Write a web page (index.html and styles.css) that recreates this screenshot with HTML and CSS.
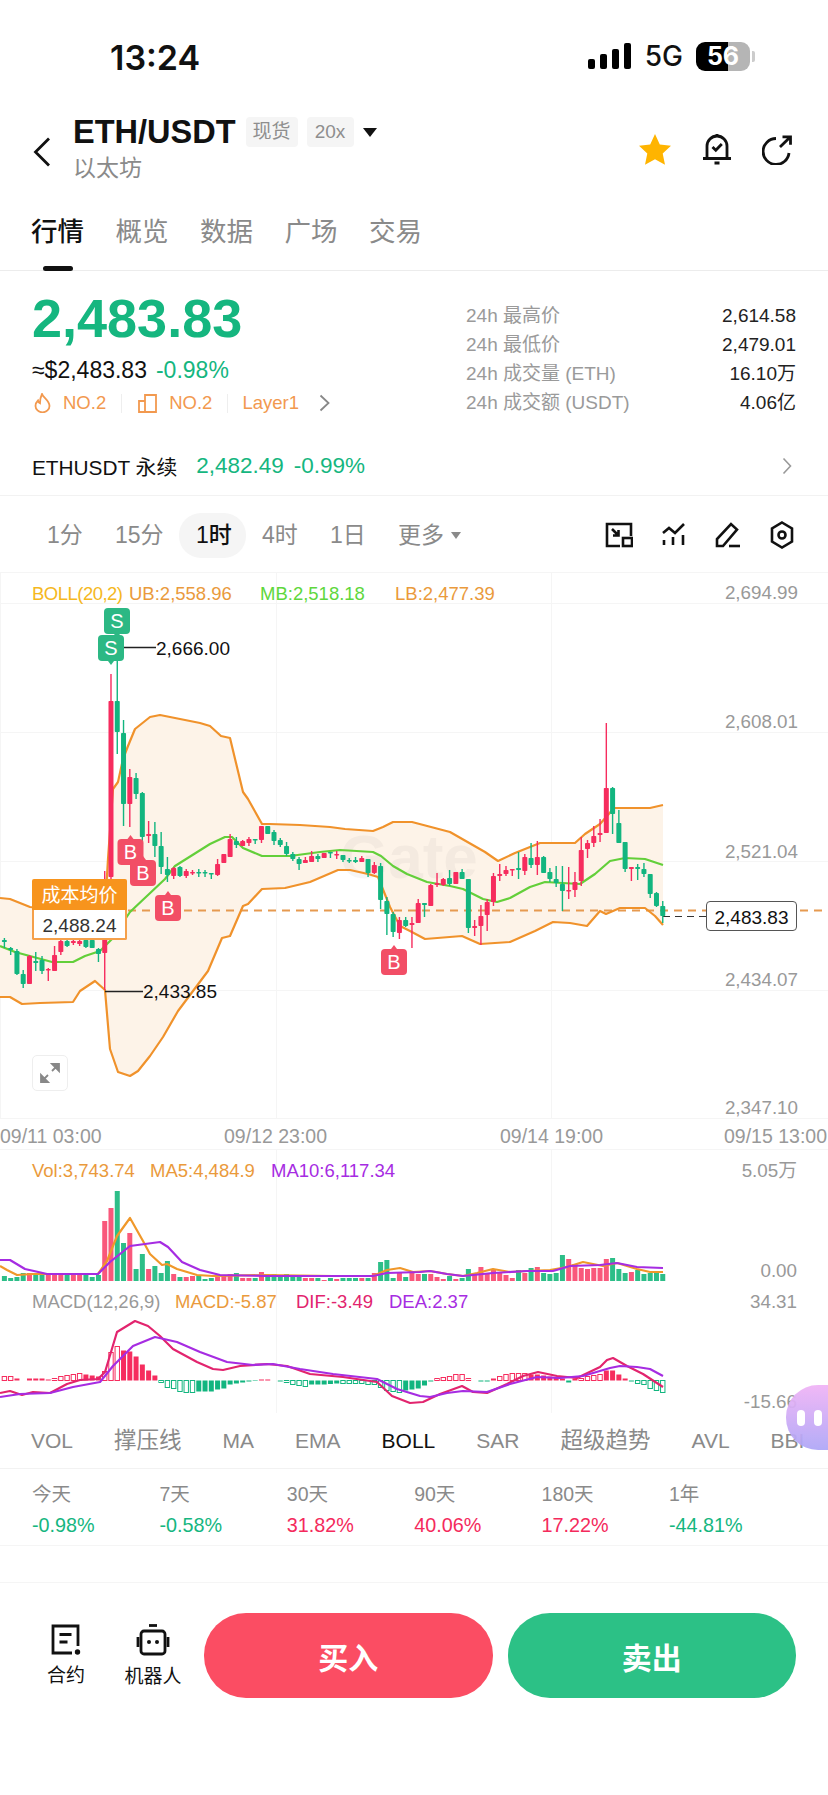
FILE: index.html
```html
<!DOCTYPE html>
<html lang="zh-CN">
<head>
    <meta charset="UTF-8">
    <meta name="viewport" content="width=device-width, initial-scale=1.0">
    <title>ETH/USDT</title>
    <link rel="stylesheet" href="styles.css">
</head>
<body>
    <div class="page">
        <div class="status">
            <span class="clock">13:24</span>
            <div class="status-right">
                <svg class="signal" width="44" height="26" viewBox="0 0 44 26">
                    <rect x="0" y="16" width="7" height="10" rx="2"/>
                    <rect x="12" y="11" width="7" height="15" rx="2"/>
                    <rect x="24" y="6" width="7" height="20" rx="2"/>
                    <rect x="36" y="0" width="7" height="26" rx="2"/>
                </svg>
                <span class="net">5G</span>
                <div class="battery"><span>56</span></div>
                <i class="battery-nub"></i>
            </div>
        </div>

        <div class="nav">
            <svg class="back" width="18" height="30" viewBox="0 0 18 30"><path d="M16 1.500 2.500 15 16 28.500"/></svg>
            <div class="pair">
                <div class="pair-top">
                    <h1>ETH/USDT</h1>
                    <span class="chip">现货</span>
                    <span class="chip">20x</span>
                    <i class="caret"></i>
                </div>
                <div class="pair-sub">以太坊</div>
            </div>
            <div class="nav-icons">
                <svg width="34" height="33" viewBox="0 0 34 33"><path class="star" d="M17 1l4.800 10.500 11.200 1.300-8.300 7.700 2.300 11.300L17 26.300 7 31.800l2.300-11.300L1 12.800l11.200-1.300z"/></svg>
                <svg class="line-icon" width="30" height="33" viewBox="0 0 30 33">
                    <path d="M1 25.500h28M5 25.500V13a10 10 0 0 1 20 0v12.500"/>
                    <path d="M10.500 14l3.300 3.300 6-6.300"/>
                    <path d="M15 1v2M12.500 30h5"/>
                </svg>
                <svg class="line-icon" width="30" height="30" viewBox="0 0 30 30">
                    <path d="M27 18A13 13 0 1 1 14 3.500"/>
                    <path d="M18 12 28.500 1.800M20.500 1.800h8v8"/>
                </svg>
            </div>
        </div>

        <div class="tabs">
            <span class="tab active">行情</span>
            <span class="tab">概览</span>
            <span class="tab">数据</span>
            <span class="tab">广场</span>
            <span class="tab">交易</span>
        </div>

        <div class="ticker">
            <div class="ticker-left">
                <div class="last-price">2,483.83</div>
                <div class="fiat-row"><span>≈$2,483.83</span><span class="up">-0.98%</span></div>
                <div class="rank-row">
                    <svg width="17" height="20" viewBox="0 0 17 20"><path d="M8 1c1 3.500 7.500 6.500 7.500 12a7 6.300 0 0 1-14 0c0-2.500 1-4 2.500-5.500.3 1.500 1 2.300 2 2.800C6 7 6.500 4 8 1z"/></svg>
                    <span>NO.2</span>
                    <i class="rank-sep"></i>
                    <svg width="19" height="20" viewBox="0 0 19 20"><path d="M1 19V8h6v11zM7 19V2h11v17zM1 19h17"/></svg>
                    <span>NO.2</span>
                    <i class="rank-sep"></i>
                    <span>Layer1</span>
                    <svg class="rank-more" width="11" height="18" viewBox="0 0 11 18"><path d="M1.500 1.500 9.500 9l-8 7.500"/></svg>
                </div>
            </div>
            <dl class="stats">
                <div><dt>24h 最高价</dt><dd>2,614.58</dd></div>
                <div><dt>24h 最低价</dt><dd>2,479.01</dd></div>
                <div><dt>24h 成交量 (ETH)</dt><dd>16.10万</dd></div>
                <div><dt>24h 成交额 (USDT)</dt><dd>4.06亿</dd></div>
            </dl>
        </div>

        <div class="perp">
            <span class="perp-name">ETHUSDT 永续</span>
            <span class="up">2,482.49</span>
            <span class="up">-0.99%</span>
            <svg width="10" height="18" viewBox="0 0 10 18"><path d="M1.500 1.500 8.500 9l-7 7.500"/></svg>
        </div>

        <div class="intervals">
            <span class="iv iv-1">1分</span>
            <span class="iv iv-2">15分</span>
            <span class="iv iv-3 active">1时</span>
            <span class="iv iv-4">4时</span>
            <span class="iv iv-5">1日</span>
            <span class="iv more">更多<i></i></span>
            <div class="tools">
                <svg class="line-icon thin" width="28" height="26" viewBox="0 0 28 26">
                    <path d="M15 24H2V2h24v12"/><rect x="18" y="16" width="9" height="8"/>
                    <path d="M7 7l6 6M13.500 8v5.500H8"/>
                </svg>
                <svg class="line-icon thin" width="24" height="26" viewBox="0 0 24 26">
                    <path d="M1 11l6-5 6 5 9-9"/><path d="M2 18v5M11 15v8M21 13v10"/>
                </svg>
                <svg class="line-icon thin" width="26" height="26" viewBox="0 0 26 26">
                    <path d="M2 24v-7L16 2l6 5.500L8 24z"/><path d="M14 24h11"/>
                </svg>
                <svg class="line-icon thin" width="24" height="28" viewBox="0 0 24 28">
                    <path d="M12 1.500l10 6v13l-10 6-10-6v-13z"/><circle cx="12" cy="14" r="3.500"/>
                </svg>
            </div>
        </div>

        <div class="chart">
            <svg id="plot" class="plot" width="828" height="841" viewBox="0 573 828 841">
                <g class="grid">
                    <path d="M0 573.500H828M0 604.500H828M0 733.500H828M0 862.500H828M0 991.500H828M0 1119.500H828M0 1150.500H828"/>
                    <path d="M.5 573V1119M276.500 573V1119M551.500 573V1119M276.500 1150V1414M551.500 1150V1414"/>
                </g>
                <g id="bandLayer"></g>
                <text class="watermark" x="340" y="879">Gate</text>
                <g id="mainLayer"></g>
                <g id="volLayer"></g>
                <g id="macdLayer"></g>

                <text class="lg" y="601"><tspan class="c-boll" x="32" textLength="91">BOLL(20,2)</tspan><tspan class="c-orange" x="129">UB:2,558.96</tspan></text>
                <text class="lg c-green" x="260" y="601">MB:2,518.18</text>
                <text class="lg c-orange" x="395" y="601">LB:2,477.39</text>

                <text class="ax" x="798" y="600">2,694.99</text>
                <text class="ax" x="798" y="729">2,608.01</text>
                <text class="ax" x="798" y="859">2,521.04</text>
                <text class="ax" x="798" y="987">2,434.07</text>
                <text class="ax" x="798" y="1115">2,347.10</text>

                <path class="tick" d="M124 648.500h32M105 992.500h38"/>
                <text class="mark" x="156" y="656">2,666.00</text>
                <text class="mark" x="143" y="999">2,433.85</text>

                <text class="ts" x="0" y="1144">09/11 03:00</text>
                <text class="ts" x="224" y="1144">09/12 23:00</text>
                <text class="ts" x="500" y="1144">09/14 19:00</text>
                <text class="ts" x="724" y="1144">09/15 13:00</text>

                <text class="lg c-orange" x="32" y="1178">Vol:3,743.74</text>
                <text class="lg c-orange" x="150" y="1178">MA5:4,484.9</text>
                <text class="lg c-purple" x="271" y="1178">MA10:6,117.34</text>
                <text class="ax" x="797" y="1178">5.05万</text>
                <text class="ax" x="797" y="1278">0.00</text>

                <text class="lg c-grey" x="32" y="1309">MACD(12,26,9)</text>
                <text class="lg c-orange" x="175" y="1309">MACD:-5.87</text>
                <text class="lg c-pink" x="296" y="1309">DIF:-3.49</text>
                <text class="lg c-purple" x="389" y="1309">DEA:2.37</text>
                <text class="ax" x="797" y="1309">34.31</text>
                <text class="ax" x="797" y="1409">-15.66</text>
            </svg>

            <div class="cost-tag">
                <div class="cost-head">成本均价</div>
                <div class="cost-val">2,488.24</div>
            </div>
            <div class="price-tag">2,483.83</div>
            <div class="expand">
                <svg width="20" height="20" viewBox="0 0 20 20"><path d="M1 19v-7l7 7zM19 1v7l-7-7zM4 16l4-4M16 4l-4 4"/></svg>
            </div>
        </div>

        <div class="indicators">
            <span>VOL</span>
            <span class="cjk">撑压线</span>
            <span>MA</span>
            <span>EMA</span>
            <span class="active">BOLL</span>
            <span>SAR</span>
            <span class="cjk">超级趋势</span>
            <span>AVL</span>
            <span>BBI</span>
        </div>

        <div class="periods">
            <div><span>今天</span><b class="up">-0.98%</b></div>
            <div><span>7天</span><b class="up">-0.58%</b></div>
            <div><span>30天</span><b class="down">31.82%</b></div>
            <div><span>90天</span><b class="down">40.06%</b></div>
            <div><span>180天</span><b class="down">17.22%</b></div>
            <div><span>1年</span><b class="up">-44.81%</b></div>
        </div>

        <div class="actions">
            <div class="side-link">
                <svg class="line-icon" width="30" height="31" viewBox="0 0 30 31">
                    <path d="M27 22V2H2v27h19"/><path d="M8.500 10.500h12M8.500 18h8"/>
                    <circle class="solid" cx="26.500" cy="28" r="2.700"/>
                </svg>
                <span>合约</span>
            </div>
            <div class="side-link">
                <svg class="line-icon" width="34" height="32" viewBox="0 0 34 32">
                    <path d="M13 1.500h8"/><rect x="5" y="7" width="24" height="23" rx="3"/>
                    <path d="M2 13v10M32 13v10"/>
                    <circle class="solid" cx="13" cy="18" r="2"/><circle class="solid" cx="21" cy="18" r="2"/>
                </svg>
                <span>机器人</span>
            </div>
            <button class="trade buy">买入</button>
            <button class="trade sell">卖出</button>
        </div>

        <div class="bot"><i></i><i></i></div>
    </div>
    <script src="script.js"></script>
</body>
</html>
```

FILE: styles.css
```css
* {
    box-sizing: border-box;
}

body {
    margin: 0;
    background: white;
    font-family: "Liberation Sans", "Noto Sans CJK SC", sans-serif;
    color: #111;
}

.page {
    position: relative;
    width: 828px;
    height: 1795px;
    overflow: hidden;
}

.up {
    color: #15b67f;
}

.down {
    color: #f42a5c;
}

/* status bar */
.status {
    height: 98px;
    padding: 39px 0 0 110px;
    display: flex;
    justify-content: space-between;
    font-family: Inter, sans-serif;
}

.clock {
    font-size: 34px;
    font-weight: 600;
    line-height: 38px;
}

.status-right {
    display: flex;
    align-items: center;
    height: 30px;
    padding-right: 73px;
    margin-top: 2px;
}

.signal {
    margin-left: 0;
    fill: #000;
}

.net {
    margin-left: 13px;
    font-size: 28px;
    font-weight: 500;
}

.battery {
    margin-left: 13px;
    width: 54px;
    height: 29px;
    border-radius: 9px;
    background: linear-gradient(90deg, #000 60%, #b5b5b5 60%);
    color: white;
    font-size: 25px;
    font-weight: 700;
    line-height: 29px;
    text-align: center;
}

.battery-nub {
    margin-left: 2px;
    width: 3px;
    height: 11px;
    border-radius: 0 2px 2px 0;
    background: #ccc;
}

/* pair header */
.nav {
    height: 92px;
    padding: 19px 36px 0 33px;
    display: flex;
    align-items: flex-start;
}

.back {
    margin-top: 20px;
    fill: none;
    stroke: #111;
    stroke-width: 2.8;
}

.pair {
    margin-left: 22px;
}

.pair-top {
    display: flex;
    align-items: center;
    height: 30px;
}

.pair-top h1 {
    margin: 0 10px 0 0;
    font-size: 32.500px;
    font-weight: 700;
}

.chip {
    height: 30px;
    min-width: 47px;
    padding: 0 7px;
    margin-right: 9px;
    border-radius: 4px;
    background: #f5f5f5;
    color: #8e8e8e;
    font-size: 19px;
    line-height: 30px;
    text-align: center;
}

.caret {
    width: 0;
    height: 0;
    border-left: 7px solid transparent;
    border-right: 7px solid transparent;
    border-top: 9px solid #111;
}

.pair-sub {
    margin-top: 5px;
    font-size: 23px;
    line-height: 32px;
    color: #8a8a8a;
}

.nav-icons {
    margin-left: auto;
    display: flex;
    align-items: center;
    gap: 30px;
    margin-top: 16px;
}

.star {
    fill: #ffb400;
}

.line-icon {
    fill: none;
    stroke: #111;
    stroke-width: 2.800;
}

.line-icon .solid {
    fill: #111;
    stroke: none;
}

.line-icon.thin {
    stroke-width: 2.600;
}

/* section tabs */
.tabs {
    height: 81px;
    padding: 22px 0 0 31px;
    display: flex;
    gap: 31.500px;
    border-bottom: 1px solid #ececec;
}

.tab {
    position: relative;
    height: 40px;
    font-size: 26.500px;
    line-height: 40px;
    color: #8a8a8a;
}

.tab.active {
    color: #111;
    font-weight: 500;
}

.tab.active::after {
    content: '';
    position: absolute;
    left: 12px;
    top: 54px;
    width: 30px;
    height: 5px;
    border-radius: 3px;
    background: #111;
}

/* price block */
.ticker {
    height: 165px;
    padding: 20px 32px 0;
    display: flex;
    justify-content: space-between;
}

.last-price {
    color: #15b67f;
    font-size: 54px;
    font-weight: 700;
    line-height: 54px;
}

.fiat-row {
    margin-top: 11px;
    display: flex;
    gap: 9px;
    font-size: 23px;
    line-height: 28px;
}

.rank-row {
    margin-top: 7px;
    display: flex;
    align-items: center;
    height: 24px;
    font-size: 18.500px;
    color: #f2994f;
}

.rank-row svg {
    fill: none;
    stroke: #f2994f;
    stroke-width: 1.800;
    margin: 0 12px 0 2px;
}

.rank-row .rank-more {
    margin: 0 0 0 20px;
    stroke: #888;
}

.rank-sep {
    width: 1px;
    height: 19px;
    margin: 0 14.500px;
    background: #eee;
}

.stats {
    margin: 9.500px 0 0;
    width: 330px;
}

.stats div {
    display: flex;
    justify-content: space-between;
    height: 29px;
    font-size: 19px;
    line-height: 29px;
}

.stats dt {
    color: #9a9a9a;
}

.stats dd {
    margin: 0;
    color: #222;
}

/* perpetual row */
.perp {
    height: 60px;
    padding: 0 36px 0 32px;
    display: flex;
    align-items: center;
    gap: 10px;
    font-size: 22.500px;
    border-bottom: 1px solid #f2f2f2;
}

.perp-name {
    margin-right: 9px;
    font-size: 20.800px;
}

.perp svg {
    margin-left: auto;
    fill: none;
    stroke: #999;
    stroke-width: 1.600;
}

/* interval switch */
.intervals {
    height: 76px;
    padding: 2px 34px 0 30px;
    display: flex;
    align-items: center;
    color: #8a8a8a;
    font-size: 23px;
}

.iv {
    height: 45px;
    padding-left: 17px;
    border-radius: 22px;
    line-height: 45px;
}

.iv-1 { width: 68px; }
.iv-2 { width: 81px; }
.iv-3 { width: 67px; }
.iv-4 { width: 67px; padding-left: 16px; }
.iv-5 { width: 68px; }

.iv.active {
    background: #f5f5f5;
    color: #111;
    font-weight: 500;
}

.iv.more {
    display: flex;
    align-items: center;
}

.iv.more i {
    margin-left: 7px;
    border-left: 5px solid transparent;
    border-right: 5px solid transparent;
    border-top: 7px solid #8a8a8a;
}

.tools {
    margin-left: auto;
    display: flex;
    align-items: center;
    gap: 29px;
}

/* chart */
.chart {
    position: relative;
    height: 841px;
}

.plot {
    display: block;
}

.grid path {
    fill: none;
    stroke: #f5f5f5;
    stroke-width: 1;
}

.watermark {
    font-size: 62px;
    font-weight: 700;
    fill: rgba(110, 110, 110, .06);
}

.lg {
    font-size: 18.500px;
}

.ts {
    font-size: 19.500px;
    fill: #999;
}

.ax {
    font-size: 18.800px;
    fill: #999;
    text-anchor: end;
}

.mark {
    font-size: 19px;
    fill: #111;
}

.tick {
    fill: none;
    stroke: #222;
    stroke-width: 1.500;
}

.c-boll { fill: #f5b81e; }
.c-orange { fill: #ea9a3c; }
.c-green { fill: #5ed73c; }
.c-grey { fill: #999; }
.c-purple { fill: #a62ce2; }
.c-pink { fill: #e2246e; }

.badge-text {
    font-size: 20px;
    fill: white;
    text-anchor: middle;
}

.cost-tag {
    position: absolute;
    left: 32px;
    top: 307px;
    width: 95px;
    text-align: center;
    font-size: 19px;
}

.cost-head {
    height: 31px;
    background: #f7941d;
    border-radius: 2px 2px 0 0;
    color: white;
    line-height: 33px;
}

.cost-val {
    height: 30px;
    background: white;
    border: 2px solid #f5a04a;
    border-top: none;
    border-radius: 0 0 2px 2px;
    color: #333;
    line-height: 31px;
}

.price-tag {
    position: absolute;
    left: 706px;
    top: 329px;
    width: 91px;
    height: 30px;
    border: 1px solid #555;
    border-radius: 4px;
    background: white;
    font-size: 19px;
    line-height: 31px;
    text-align: center;
}

.expand {
    position: absolute;
    left: 32px;
    top: 483px;
    width: 36px;
    height: 36px;
    padding-top: 7px;
    border: 1px solid #eee;
    border-radius: 5px;
    background: white;
    text-align: center;
}

.expand svg {
    fill: #888;
    stroke: #888;
    stroke-width: 1.800;
}

/* indicator tabs */
.indicators {
    height: 56px;
    padding: 0 0 0 31px;
    display: flex;
    align-items: center;
    gap: 41px;
    font-size: 21px;
    line-height: 30px;
    color: #8a8a8a;
    white-space: nowrap;
    border-bottom: 1px solid #f2f2f2;
}

.indicators .cjk {
    font-size: 22.500px;
}

.indicators .active {
    color: #111;
}

/* change by period */
.periods {
    height: 77px;
    padding: 10px 0 0 32px;
    display: grid;
    grid-template-columns: repeat(6, 127.400px);
    border-bottom: 1px solid #f5f5f5;
}

.periods span {
    display: block;
    font-size: 19.500px;
    line-height: 30px;
    color: #8a8a8a;
}

.periods b {
    display: block;
    margin-top: 1px;
    font-size: 19.800px;
    font-weight: 400;
    line-height: 30px;
}

/* buy / sell */
.actions {
    margin-top: 36px;
    height: 140px;
    padding: 30px 32px 0 0;
    display: flex;
    align-items: flex-start;
    border-top: 1px solid #f5f5f5;
}

.side-link {
    width: 82px;
    padding-top: 11px;
    text-align: center;
    font-size: 19px;
}

.side-link svg {
    display: block;
    margin: 0 auto 5px;
}

.side-link:first-child {
    margin-left: 25px;
}

.side-link + .side-link {
    margin-left: 5px;
}

.side-link span {
    white-space: nowrap;
}

.trade {
    width: 288.500px;
    height: 85px;
    border: none;
    border-radius: 42px;
    color: white;
    font-family: inherit;
    font-size: 30px;
    font-weight: 700;
}

.buy {
    margin-left: 10px;
    background: #fb4d63;
}

.sell {
    margin-left: 15px;
    background: #2cc186;
}

/* floating assistant */
.bot {
    position: absolute;
    left: 786px;
    top: 1385px;
    width: 80px;
    height: 65px;
    padding: 25px 0 0 11px;
    display: flex;
    gap: 9px;
    border-radius: 32px;
    background: linear-gradient(180deg, #f0b3f6, #aea6f7);
    opacity: .93;
}

.bot i {
    width: 8px;
    height: 16px;
    border-radius: 4px;
    background: white;
}
```

FILE: script.js
```js
const RED = '#f62c5e';
const GREEN = '#12b57f';
const NS = 'http://www.w3.org/2000/svg';

// y positions are page pixels, the plot's viewBox starts at the same origin
const candles = [
    [939, 941, 943, 949, 'g'], [948, 949, 951, 956, 'g'], [950, 952, 975, 976, 'g'], [971, 975, 985, 989, 'g'],
    [956, 957, 985, 985, 'r'], [953, 962, 964, 972, 'g'], [957, 961, 972, 975, 'g'], [969, 970, 971, 982, 'r'],
    [947, 956, 972, 972, 'r'], [941, 942, 953, 956, 'r'], [941, 942, 947, 948, 'g'], [941, 942, 944, 946, 'r'],
    [941, 942, 945, 947, 'r'], [941, 941, 948, 949, 'g'], [941, 941, 949, 949, 'g'], [949, 950, 955, 963, 'g'],
    [872, 882, 954, 991, 'r'], [675, 702, 878, 885, 'r'], [660, 702, 733, 755, 'g'], [721, 734, 805, 827, 'g'],
    [770, 778, 805, 828, 'r'], [774, 779, 795, 800, 'g'], [793, 794, 838, 845, 'g'], [822, 835, 837, 844, 'r'],
    [823, 835, 847, 858, 'g'], [833, 847, 868, 875, 'g'], [858, 870, 876, 883, 'g'], [868, 869, 877, 880, 'r'],
    [867, 868, 877, 878, 'g'], [870, 872, 877, 879, 'r'], [871, 873, 874, 876, 'r'], [870, 873, 874, 878, 'g'],
    [871, 873, 874, 878, 'g'], [874, 874, 875, 880, 'g'], [860, 865, 876, 877, 'r'], [855, 855, 864, 864, 'r'],
    [835, 840, 858, 858, 'r'], [838, 842, 846, 849, 'g'], [841, 842, 847, 847, 'r'], [838, 840, 844, 847, 'r'],
    [840, 840, 841, 845, 'g'], [827, 827, 841, 844, 'r'], [827, 827, 835, 835, 'g'], [831, 833, 842, 846, 'g'],
    [839, 841, 846, 848, 'g'], [843, 847, 855, 857, 'g'], [853, 855, 860, 862, 'g'], [858, 860, 865, 871, 'g'],
    [858, 861, 864, 864, 'r'], [852, 857, 863, 863, 'r'], [855, 857, 860, 863, 'g'], [854, 854, 859, 859, 'r'],
    [853, 853, 854, 859, 'g'], [852, 855, 856, 860, 'r'], [856, 856, 861, 863, 'g'], [859, 861, 862, 864, 'g'],
    [858, 861, 863, 864, 'g'], [857, 859, 863, 863, 'r'], [860, 860, 874, 878, 'g'], [863, 866, 874, 875, 'r'],
    [864, 867, 901, 910, 'g'], [898, 902, 915, 936, 'g'], [913, 915, 933, 938, 'g'], [918, 921, 934, 940, 'r'],
    [918, 921, 927, 928, 'g'], [918, 924, 926, 949, 'r'], [900, 904, 924, 924, 'r'], [904, 904, 906, 918, 'g'],
    [885, 886, 907, 907, 'r'], [874, 884, 886, 888, 'r'], [879, 880, 886, 887, 'r'], [871, 879, 885, 887, 'g'],
    [873, 873, 885, 885, 'r'], [870, 873, 880, 880, 'g'], [880, 880, 929, 934, 'g'], [921, 927, 929, 937, 'r'],
    [906, 917, 927, 946, 'r'], [900, 903, 916, 932, 'r'], [874, 877, 903, 907, 'r'], [865, 875, 877, 882, 'r'],
    [867, 871, 875, 877, 'r'], [870, 870, 871, 877, 'r'], [853, 869, 871, 880, 'g'], [855, 858, 872, 876, 'r'],
    [844, 859, 866, 869, 'g'], [842, 858, 866, 876, 'r'], [857, 858, 874, 874, 'g'], [869, 873, 880, 883, 'g'],
    [867, 880, 884, 888, 'g'], [867, 885, 892, 912, 'g'], [868, 891, 892, 900, 'r'], [873, 883, 891, 898, 'r'],
    [838, 851, 882, 887, 'r'], [841, 844, 850, 859, 'r'], [827, 837, 844, 848, 'r'], [820, 834, 836, 843, 'r'],
    [724, 789, 834, 834, 'r'], [788, 789, 815, 835, 'g'], [811, 824, 844, 844, 'g'], [843, 843, 870, 873, 'g'],
    [868, 868, 870, 882, 'r'], [865, 868, 870, 881, 'g'], [864, 870, 875, 878, 'g'], [875, 875, 895, 899, 'g'],
    [893, 894, 907, 908, 'g'], [902, 907, 917, 924, 'g']
];

const volumes = [
    5, 3, 4, 8, 8, 6, 6, 7, 7, 7, 6, 6, 8, 6, 4, 6, 60, 73, 90, 38, 48, 12, 27, 12, 15, 8, 20, 7, 4, 4, 5, 5, 2, 3, 4, 5,
    7, 8, 3, 3, 3, 9, 4, 7, 4, 7, 4, 6, 3, 3, 3, 1, 3, 2, 3, 3, 3, 3, 3, 8, 19, 21, 3, 8, 4, 8, 7, 7, 7, 4, 2, 5, 2, 3,
    12, 8, 14, 7, 12, 8, 6, 3, 11, 8, 13, 14, 8, 7, 8, 26, 22, 17, 13, 12, 13, 13, 22, 23, 12, 8, 9, 11, 7, 8, 8, 7
];

// macd histogram height above (+) or below (-) the zero line, "h" = hollow bar
const macd = [
    '4h', '4h', '2', '0', '2', '2', '2', '1', '2h', '4h', '5h', '6h', '7h', '6', '5', '4', '9h', '28h', '34h', '30', '29',
    '24', '16', '10', '5', '-2h', '-7h', '-8h', '-11h', '-12h', '-12h', '-11', '-11', '-11', '-9', '-8', '-4', '-3', '-2',
    '-1', '-0.5', '1', '1', '0', '-1', '-2h', '-4h', '-5h', '-6h', '-4', '-4', '-4', '-3.5', '-3', '-3h', '-3h', '-3h', '-3h',
    '-4h', '-4h', '-7h', '-10h', '-11h', '-12h', '-10', '-9', '-8', '-5', '-1', '2h', '3h', '4h', '6h', '6h', '2h', '0', '-1',
    '-1', '2', '4h', '6h', '7h', '7h', '7h', '6', '6', '5', '4', '3', '2', '-2', '2', '2h', '4h', '5h', '6h', '10', '10', '6',
    '2', '-1', '-3h', '-4h', '-8h', '-10h', '-12h'
];

const upper = [[0, 899], [10, 900], [30, 908], [100, 915], [105, 910], [108, 860], [113, 790], [118, 783], [123, 760], [128, 747], [135, 730], [150, 718], [160, 716],
    [180, 720], [200, 724], [210, 727], [221, 737], [230, 739], [243, 793], [248, 800], [262, 825], [270, 825], [300, 826], [330, 828], [345, 830],
    [373, 832], [383, 828], [393, 823], [412, 823], [450, 833], [485, 853], [498, 862], [515, 854], [540, 844], [575, 844], [585, 835], [600, 825],
    [614, 809], [650, 809], [663, 806]];

const lower = [[0, 998], [10, 998], [22, 1005], [40, 1004], [73, 1003], [80, 992], [95, 982], [105, 991], [110, 1050], [118, 1073], [130, 1077],
    [138, 1072], [150, 1057], [163, 1038], [178, 1012], [208, 972], [222, 939], [230, 937], [243, 907], [248, 905], [262, 890], [285, 889], [310, 883],
    [338, 871], [350, 871], [368, 875], [378, 878], [390, 908], [400, 927], [410, 932], [425, 940], [462, 937], [480, 945], [510, 943], [535, 932],
    [553, 923], [570, 924], [587, 927], [600, 912], [606, 915], [620, 909], [645, 909], [655, 917], [663, 926]];

const middle = [[0, 947], [15, 953], [52, 963], [73, 963], [85, 957], [100, 952], [112, 940], [130, 913], [165, 880], [175, 867], [210, 845],
    [225, 838], [232, 838], [243, 849], [262, 857], [290, 857], [320, 853], [340, 851], [373, 853], [381, 857], [393, 867], [407, 875], [427, 883],
    [450, 887], [463, 890], [483, 900], [497, 903], [510, 899], [530, 888], [545, 883], [580, 885], [595, 875], [610, 862], [625, 859], [645, 860], [663, 866]];

const volMa5 = [[0, 1267], [7, 1271], [17, 1276], [33, 1275], [98, 1275], [107, 1262], [117, 1237], [130, 1219], [143, 1242], [150, 1255], [162, 1266],
    [167, 1265], [177, 1270], [197, 1276], [213, 1277], [267, 1276], [333, 1277], [373, 1277], [387, 1271], [400, 1269], [413, 1273], [430, 1272], [447, 1275],
    [463, 1277], [477, 1274], [493, 1270], [510, 1273], [527, 1272], [550, 1271], [567, 1268], [583, 1263], [603, 1267], [617, 1264], [637, 1270], [650, 1273], [663, 1273]];

const volMa10 = [[0, 1261], [10, 1261], [25, 1270], [47, 1275], [98, 1275], [110, 1263], [130, 1247], [160, 1243], [168, 1248], [182, 1263], [200, 1271],
    [220, 1276], [267, 1277], [333, 1277], [373, 1277], [387, 1274], [420, 1273], [430, 1272], [447, 1275], [463, 1277], [493, 1274], [527, 1272], [553, 1272],
    [570, 1267], [600, 1266], [617, 1264], [637, 1268], [663, 1269]];

const dif = [[0, 1394], [10, 1392], [22, 1396], [33, 1393], [50, 1394], [67, 1385], [80, 1381], [98, 1380], [105, 1373], [117, 1333], [135, 1322], [148, 1327],
    [160, 1337], [173, 1350], [197, 1363], [213, 1370], [223, 1371], [240, 1367], [267, 1365], [287, 1367], [310, 1375], [343, 1378], [377, 1383], [392, 1397],
    [410, 1404], [423, 1403], [440, 1395], [462, 1387], [473, 1393], [487, 1394], [507, 1385], [523, 1377], [538, 1373], [557, 1377], [577, 1379], [600, 1368],
    [607, 1361], [613, 1359], [627, 1367], [643, 1375], [663, 1388]];

const dea = [[0, 1398], [20, 1395], [50, 1394], [73, 1388], [100, 1383], [113, 1367], [133, 1347], [155, 1338], [177, 1343], [200, 1353], [227, 1363], [253, 1366],
    [273, 1365], [300, 1370], [333, 1375], [377, 1380], [397, 1390], [420, 1397], [430, 1398], [447, 1394], [463, 1392], [487, 1393], [510, 1385], [537, 1378],
    [560, 1379], [583, 1377], [610, 1369], [620, 1367], [637, 1368], [650, 1370], [663, 1377]];

const badges = [
    ['S', 117, 622], ['S', 111, 649], ['B', 130.5, 853], ['B', 143, 874], ['B', 168, 909], ['B', 394, 963]
];

function add(parent, name, attrs) {
    const el = document.createElementNS(NS, name);
    for (const key in attrs) el.setAttribute(key, attrs[key]);
    parent.appendChild(el);
    return el;
}

function pts(list) {
    return list.map(p => p.join(',')).join(' ');
}

function line(parent, list, color, width) {
    add(parent, 'polyline', {
        points: pts(list), fill: 'none', stroke: color,
        'stroke-width': width || 2.2, 'stroke-linejoin': 'round'
    });
}

function candleX(i) {
    return 4.4 + i * 6.27;
}

const bandLayer = document.getElementById('bandLayer');
add(bandLayer, 'polygon', { points: pts(upper.concat(lower.slice().reverse())), fill: '#fdf3e8' });

const mainLayer = document.getElementById('mainLayer');
add(mainLayer, 'path', { d: 'M128 911.500H828', stroke: '#e69a50', 'stroke-width': 2, 'stroke-dasharray': '8 6' });
add(mainLayer, 'path', { d: 'M663 917.500h43', stroke: '#333', 'stroke-width': 1, 'stroke-dasharray': '7 5' });
line(mainLayer, upper, '#f0922b');
line(mainLayer, lower, '#f0922b');
line(mainLayer, middle, '#63cf3a');

candles.forEach((c, i) => {
    const x = candleX(i);
    const color = c[4] === 'r' ? RED : GREEN;
    add(mainLayer, 'rect', { x: x - 0.7, y: c[0], width: 1.4, height: c[3] - c[0], fill: color });
    add(mainLayer, 'rect', { x: x - 2.5, y: c[1], width: 5, height: Math.max(c[2] - c[1], 1.5), rx: 0.8, fill: color });
});

badges.forEach(b => {
    const isSell = b[0] === 'S';
    const [x, y] = [b[1], b[2]];
    const color = isSell ? '#2cb884' : '#f24e66';
    add(mainLayer, 'rect', { x: x - 13, y: y - 13, width: 26, height: 26, rx: 4, fill: color });
    const tip = isSell ? `${x - 3},${y + 13} ${x + 3},${y + 13} ${x},${y + 17}` : `${x - 3},${y - 13} ${x + 3},${y - 13} ${x},${y - 17}`;
    add(mainLayer, 'polygon', { points: tip, fill: color });
    const t = add(mainLayer, 'text', { x: x, y: y + 7, class: 'badge-text' });
    t.textContent = b[0];
});

const volLayer = document.getElementById('volLayer');
volumes.forEach((h, i) => {
    add(volLayer, 'rect', {
        x: candleX(i) - 2.5, y: 1282 - h, width: 5, height: h,
        fill: candles[i][4] === 'r' ? '#f9587b' : '#2dbe88'
    });
});
line(volLayer, volMa5, '#f0982a');
line(volLayer, volMa10, '#a62ce2');

const macdLayer = document.getElementById('macdLayer');
macd.forEach((m, i) => {
    const h = parseFloat(m);
    if (!h) return;
    const color = h > 0 ? RED : GREEN;
    const hollow = m.endsWith('h');
    add(macdLayer, 'rect', {
        x: candleX(i) - (hollow ? 2.2 : 2.5),
        y: h > 0 ? 1381.500 - h : 1381.500,
        width: hollow ? 4.4 : 5,
        height: Math.abs(h),
        fill: hollow ? 'white' : color,
        stroke: hollow ? color : 'none',
        'stroke-width': 1
    });
});
line(macdLayer, dif, '#e2246e');
line(macdLayer, dea, '#a62ce2');
```
